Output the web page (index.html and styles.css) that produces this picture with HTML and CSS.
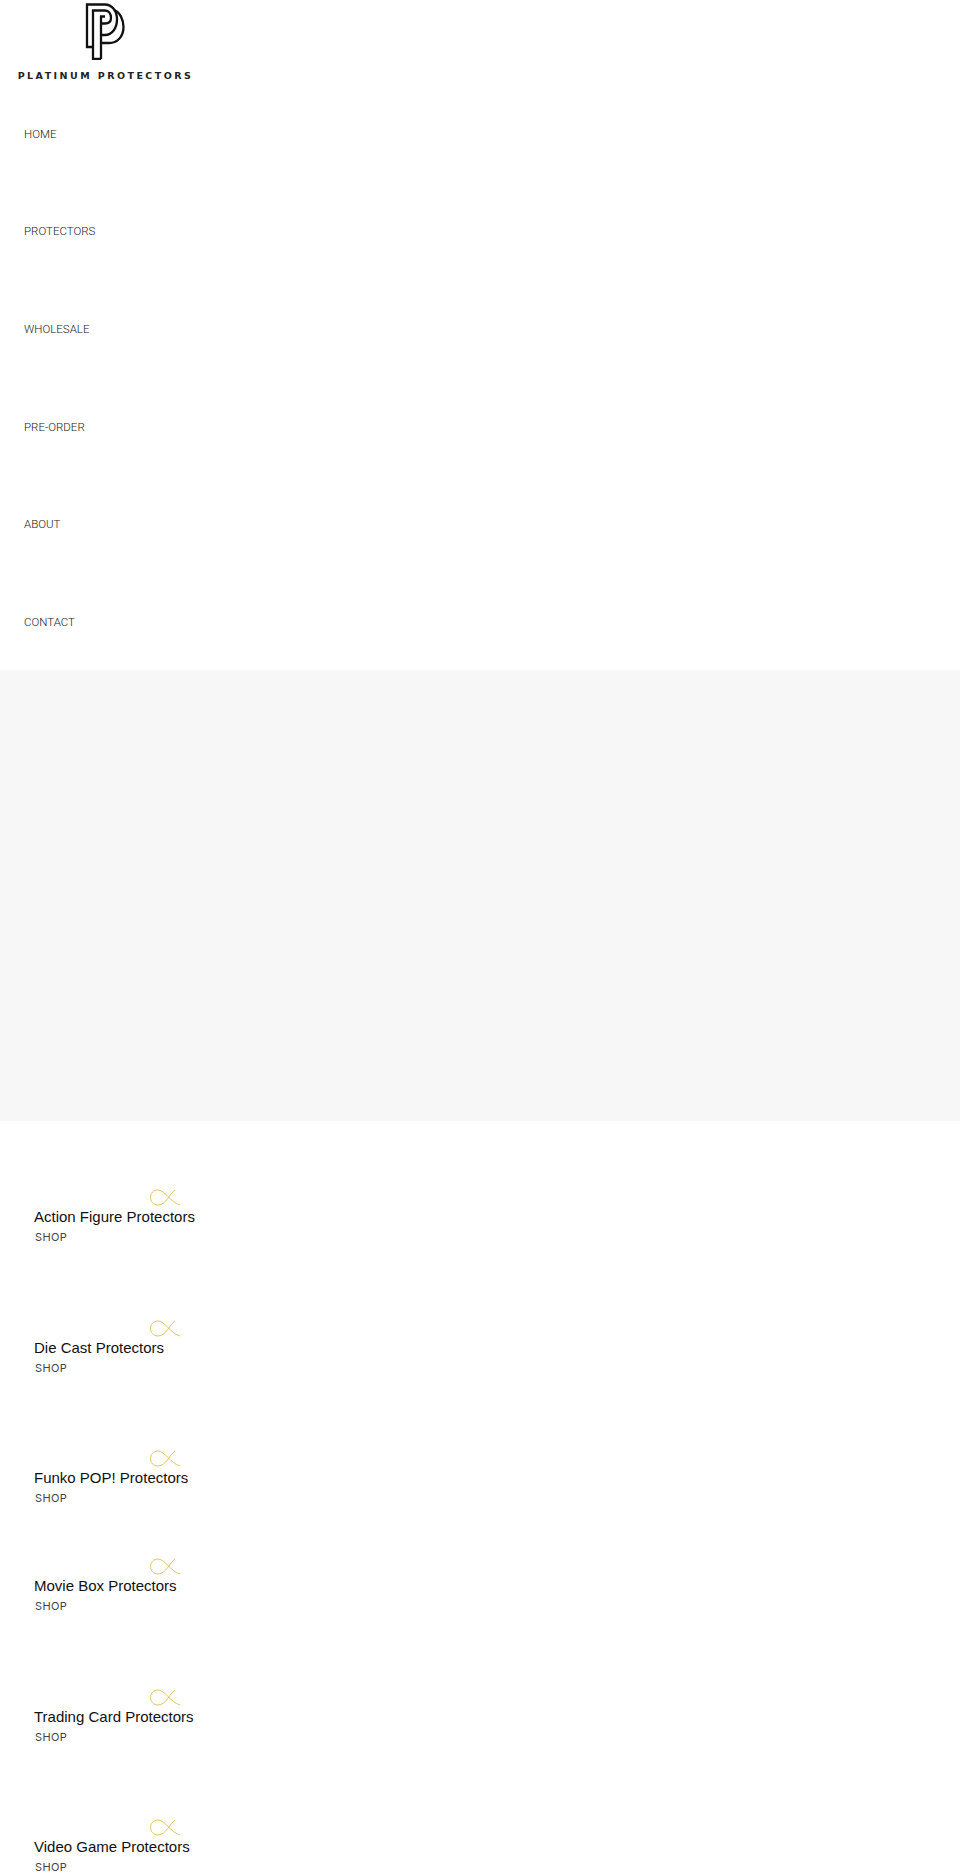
FILE: index.html
```html
<!DOCTYPE html>
<html lang="en">
<head>
  <meta charset="UTF-8" />
  <meta name="viewport" content="width=device-width, initial-scale=1.0"/>
  <title>Platinum Protectors</title>
  <link rel="stylesheet" href="styles.css">
</head>
<body>
  <header class="site-header">
    <a class="logo" href="#">
      <svg class="logo-mark" width="44" height="60" viewBox="0 0 44 60" aria-hidden="true">
        <path d="M8 47H2V4.500H20C27 4.500 32 11 32 19.500C32 28 27 35 20 35H16"/>
        <path d="M16 59H8V10.500H20C24 10.500 26 14 26 18C26 22 24 23.500 20 23.500H16"/>
        <path d="M16 59V16.500H20"/>
        <path d="M29 10C35 12 38.500 20 38.500 27C38.500 37 32 43 24 43H16"/>
      </svg>
      <span class="logo-text">PLATINUM PROTECTORS</span>
    </a>
    <nav class="main-nav">
      <a href="#">HOME</a>
      <a href="#">PROTECTORS</a>
      <a href="#">WHOLESALE</a>
      <a href="#">PRE-ORDER</a>
      <a href="#">ABOUT</a>
      <a href="#">CONTACT</a>
    </nav>
  </header>

  <section class="hero"></section>

  <section class="categories">
    <div class="category">
      <svg class="swoosh" width="32" height="19" viewBox="0 0 32 19" aria-hidden="true"><path d="M25 2C20 5 16 17 8 17C3 17 .5 13 .5 9.500C.5 6 3 2 8 2C15 2 20 14 30 17"/></svg>
      <h3>Action Figure Protectors</h3>
      <a href="#">SHOP</a>
    </div>
    <div class="category">
      <svg class="swoosh" width="32" height="19" viewBox="0 0 32 19" aria-hidden="true"><path d="M25 2C20 5 16 17 8 17C3 17 .5 13 .5 9.500C.5 6 3 2 8 2C15 2 20 14 30 17"/></svg>
      <h3>Die Cast Protectors</h3>
      <a href="#">SHOP</a>
    </div>
    <div class="category category-short">
      <svg class="swoosh" width="32" height="19" viewBox="0 0 32 19" aria-hidden="true"><path d="M25 2C20 5 16 17 8 17C3 17 .5 13 .5 9.500C.5 6 3 2 8 2C15 2 20 14 30 17"/></svg>
      <h3>Funko POP! Protectors</h3>
      <a href="#">SHOP</a>
    </div>
    <div class="category">
      <svg class="swoosh" width="32" height="19" viewBox="0 0 32 19" aria-hidden="true"><path d="M25 2C20 5 16 17 8 17C3 17 .5 13 .5 9.500C.5 6 3 2 8 2C15 2 20 14 30 17"/></svg>
      <h3>Movie Box Protectors</h3>
      <a href="#">SHOP</a>
    </div>
    <div class="category">
      <svg class="swoosh" width="32" height="19" viewBox="0 0 32 19" aria-hidden="true"><path d="M25 2C20 5 16 17 8 17C3 17 .5 13 .5 9.500C.5 6 3 2 8 2C15 2 20 14 30 17"/></svg>
      <h3>Trading Card Protectors</h3>
      <a href="#">SHOP</a>
    </div>
    <div class="category">
      <svg class="swoosh" width="32" height="19" viewBox="0 0 32 19" aria-hidden="true"><path d="M25 2C20 5 16 17 8 17C3 17 .5 13 .5 9.500C.5 6 3 2 8 2C15 2 20 14 30 17"/></svg>
      <h3>Video Game Protectors</h3>
      <a href="#">SHOP</a>
    </div>
  </section>
</body>
</html>
```

FILE: styles.css
```css
body {
  margin: 0;
  background: #fff;
  font-family: "Liberation Sans", Arial, sans-serif;
  color: #111;
  overflow-x: hidden;
}
a {
  text-decoration: none;
  color: inherit;
}

/* Header */
.site-header {
  height: 670px;
}
.logo {
  display: block;
  height: 85px;
  width: 211px;
  text-align: center;
}
.logo-mark {
  display: block;
  margin-left: 85px;
}
.logo-mark path {
  fill: none;
  stroke: #111;
  stroke-width: 2.3;
}
.logo-text {
  display: block;
  margin-top: 10px;
  font-family: "DejaVu Sans", sans-serif;
  font-size: 9.5px;
  line-height: 12px;
  font-weight: 700;
  letter-spacing: 2.45px;
  white-space: nowrap;
  color: #222;
}
.main-nav a {
  display: flex;
  align-items: center;
  height: 97.6px;
  padding-left: 24px;
  font-family: Roboto, sans-serif;
  font-weight: 300;
  font-size: 11.5px;
  color: #222;
}

/* Hero placeholder */
.hero {
  height: 451px;
  background: #f7f7f7;
}

/* Category list */
.categories {
  padding-top: 67px;
}
.category {
  height: 130.5px;
  padding-left: 34px;
}
.category-short {
  height: 108px;
}
.swoosh {
  display: block;
  margin-left: 116px;
}
.swoosh path {
  fill: none;
  stroke: #e3c35a;
  stroke-width: 1;
}
.category h3 {
  margin: 0;
  font-size: 15px;
  line-height: 20px;
  font-weight: 400;
  color: #111;
}
.category a {
  display: block;
  margin: 2px 0 0 1px;
  font-family: Inter, sans-serif;
  font-size: 11px;
  line-height: 16px;
  letter-spacing: 0.4px;
  color: #444;
}
```
